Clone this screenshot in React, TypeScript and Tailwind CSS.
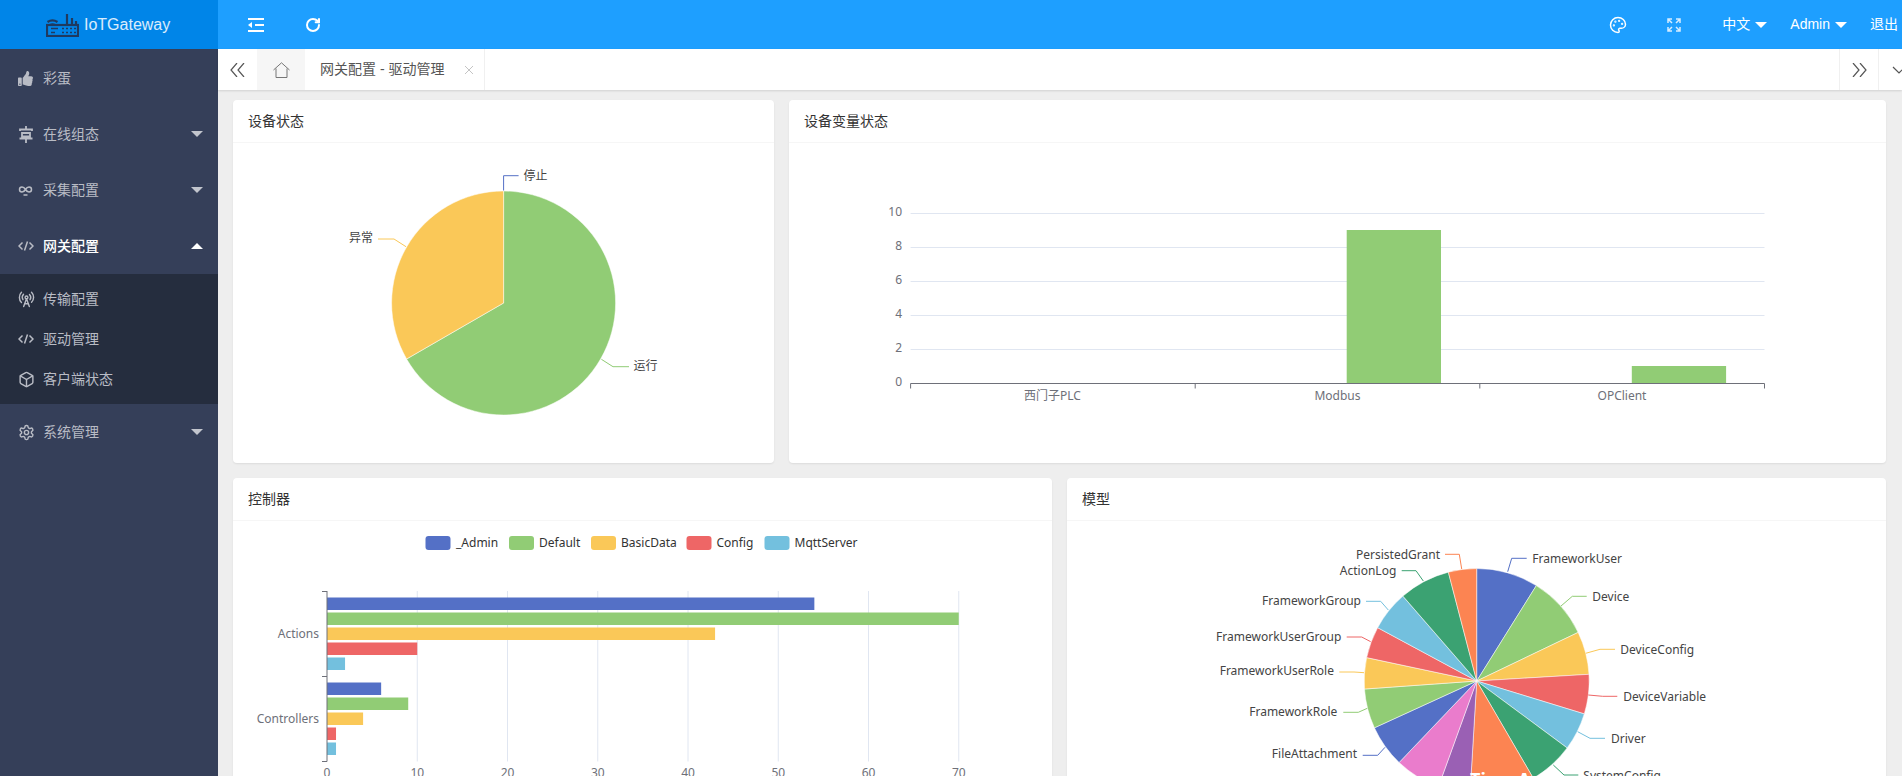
import React from "react";
import { FaThumbsUp } from "react-icons/fa";
import { LuBox, LuPalette, LuRadioTower, LuRotateCw, LuSettings } from "react-icons/lu";

const C = {
  blue: "#5470c6",
  green: "#91cc75",
  yellow: "#fac858",
  red: "#ee6666",
  sky: "#73c0de",
  teal: "#3ba272",
  orange: "#fc8452",
  purple: "#9a60b4",
  pink: "#ea7ccc",
};

function arc(cx: number, cy: number, r: number, from: number, to: number) {
  const p = (deg: number) => {
    const a = (deg * Math.PI) / 180;
    return `${cx + r * Math.sin(a)} ${cy - r * Math.cos(a)}`;
  };
  return `M${cx} ${cy}L${p(from)}A${r} ${r} 0 ${to - from > 180 ? 1 : 0} 1 ${p(to)}Z`;
}

const Caret = ({ up, active }: { up?: boolean; active?: boolean }) => (
  <span
    className={`ml-auto mr-[15px] h-0 w-0 border-x-[6px] border-x-transparent ${up ? "border-b-[6px]" : "border-t-[6px]"} ${
      active ? "border-b-white" : "border-t-[#c2c5cd]"
    }`}
  />
);

function ChainIcon() {
  return (
    <svg width="15" height="16" viewBox="0 0 15 16" fill="none" stroke="currentColor" strokeWidth="1.5">
      <path d="M7.5 7.5C6.5 5.8 5.5 5 4 5a2.5 2.5 0 0 0 0 5c1.5 0 2.5-.8 3.5-2.5S9.500 5 11 5a2.500 2.500 0 0 1 0 5c-1.500 0-2.500-.8-3.500-2.500Z" />
      <path d="M5.500 13h4" />
    </svg>
  );
}

function FlowIcon() {
  return (
    <svg width="16" height="17" viewBox="0 0 16 17" fill="none" stroke="currentColor" strokeWidth="1.800">
      <path d="M8 0v3M2 5V3.500h12V5M4 7h8v3.500H4zM1.500 12.500h13M8 12.500V17" />
    </svg>
  );
}

function CodeIcon() {
  return (
    <svg width="16" height="16" viewBox="0 0 16 16" fill="none" stroke="currentColor" strokeWidth="1.500">
      <path d="M4.500 4.500L1 8l3.500 3.500M11.500 4.500L15 8l-3.500 3.500M9.500 3.500L6.500 12.500" />
    </svg>
  );
}

const MenuItem = ({ icon, label, open, active }: { icon: React.ReactNode; label: string; open?: boolean; active?: boolean }) => (
  <div className={`flex h-14 items-center pl-[18px] text-[14px] ${active ? "font-medium text-white" : "text-[#b9bcc5]"}`}>
    <span className="flex w-[25px] text-[#b9bcc5]">{icon}</span>
    <span>{label}</span>
    {open !== undefined && <Caret up={open} active={open} />}
  </div>
);

const SubItem = ({ icon, label }: { icon: React.ReactNode; label: string }) => (
  <div className="flex h-10 items-center pl-[18px] text-[14px] text-[#b9bcc5]">
    <span className="flex w-[25px]">{icon}</span>
    {label}
  </div>
);

function Sidebar() {
  return (
    <aside className="w-[218px] shrink-0 bg-[#353f59] pt-px">
      <MenuItem icon={<FaThumbsUp size={15} />} label="彩蛋" />
      <MenuItem icon={<FlowIcon />} label="在线组态" open={false} />
      <MenuItem icon={<ChainIcon />} label="采集配置" open={false} />
      <MenuItem icon={<CodeIcon />} label="网关配置" open active />
      <div className="bg-[#252d3e] py-[5px]">
        <SubItem icon={<LuRadioTower size={17} />} label="传输配置" />
        <SubItem icon={<CodeIcon />} label="驱动管理" />
        <SubItem icon={<LuBox size={17} />} label="客户端状态" />
      </div>
      <MenuItem icon={<LuSettings size={17} />} label="系统管理" open={false} />
    </aside>
  );
}

function Logo() {
  return (
    <svg width="33" height="24" viewBox="0 0 33 24" fill="none" stroke="#1f3a5f" strokeWidth="2.200">
      <rect x="1" y="12" width="31" height="11" />
      <path d="M1.500 9a9 9 0 0 1 10 0M4 12a5 5 0 0 1 5 0M21 11V1M26 11V5M30 11V8" />
      <path d="M5 15.500h7M5 19.500h4" strokeWidth="1.500" />
      <path d="M16 15.500h2M20 15.500h2M24 15.500h2M28 15.500h2M16 19.500h2M20 19.500h2M24 19.500h2M28 19.500h2" strokeWidth="1.500" />
    </svg>
  );
}

function Header() {
  const tri = "mx-[5px] h-0 w-0 border-x-[6px] border-t-[6px] border-x-transparent border-t-white";
  return (
    <header className="flex h-[49px] shrink-0 items-center bg-[#1e9fff] text-[14px] text-white">
      <div className="flex h-full w-[218px] items-center bg-[#0085e8] pl-[46px]">
        <Logo />
        <span className="ml-[5px] text-[16px] text-white/85">IoTGateway</span>
      </div>
      <svg className="ml-[30px]" width="16" height="14" viewBox="0 0 16 14" fill="none" stroke="white" strokeWidth="2">
        <path d="M0 1h16M7 7h9M0 13h16" />
        <path d="M0 7l4-3v6z" fill="white" stroke="none" />
      </svg>
      <LuRotateCw className="ml-[41px]" size={16} strokeWidth={3} />
      <LuPalette className="ml-auto" size={18} />
      <svg className="ml-[40px]" width="14" height="14" viewBox="0 0 14 14" fill="none" stroke="#d6edff" strokeWidth="1.500">
        <path d="M1 5V1h4M1 1l4 4M9 1h4v4M13 1L9 5M1 9v4h4M1 13l4-4M13 9v4H9M13 13L9 9" />
      </svg>
      <span className="ml-[41px]">中文</span>
      <span className={tri} />
      <span className="ml-[18px]">Admin</span>
      <span className={tri} />
      <span className="ml-[18px] mr-[4px]">退出</span>
    </header>
  );
}

function TabBar() {
  return (
    <div className="z-10 flex h-[41px] shrink-0 items-stretch bg-white text-[14px] text-[#555] shadow-[0_1px_2px_rgba(0,0,0,0.12)]">
      <div className="flex w-[39px] items-center justify-center">
        <svg width="15" height="14" viewBox="0 0 15 14" fill="none" stroke="#555" strokeWidth="1.200">
          <path d="M7 0L1 7l6 7M14 0L8 7l6 7" />
        </svg>
      </div>
      <div className="flex w-[48px] items-center justify-center bg-[#f6f6f6]">
        <svg width="17" height="16" viewBox="0 0 17 16" fill="none" stroke="#777" strokeWidth="1">
          <path d="M.5 8L8.500.8 16.500 8M3 6.500V15.500h11V6.500" />
        </svg>
      </div>
      <div className="flex w-[180px] items-center border-r border-[#f0f0f0] pl-[15px]">
        <span>网关配置 - 驱动管理</span>
        <svg className="ml-[20px]" width="10" height="10" viewBox="0 0 10 10" stroke="#c4c4c4" strokeWidth="1">
          <path d="M1 1l8 8M9 1l-8 8" />
        </svg>
      </div>
      <div className="ml-auto flex w-[40px] items-center justify-center border-x border-[#f0f0f0]">
        <svg width="15" height="14" viewBox="0 0 15 14" fill="none" stroke="#555" strokeWidth="1.200">
          <path d="M1 0l6 7-6 7M8 0l6 7-6 7" />
        </svg>
      </div>
      <div className="flex w-[23px] items-center overflow-hidden pl-[13px]">
        <svg className="shrink-0" width="14" height="8" viewBox="0 0 14 8" fill="none" stroke="#555" strokeWidth="1.200">
          <path d="M1 1l6 6 6-6" />
        </svg>
      </div>
    </div>
  );
}

const Card = ({ title, className, children }: { title: string; className: string; children: React.ReactNode }) => (
  <section className={`min-w-0 rounded-sm bg-white shadow-[0_1px_2px_rgba(0,0,0,0.08)] ${className}`}>
    <div className="flex h-[43px] items-center border-b border-[#f6f6f6] px-[15px] text-[14px] text-[#333]">{title}</div>
    {children}
  </section>
);

const chartFont = "block font-['Noto_Sans','Noto_Sans_CJK_SC',sans-serif] text-[12px]";

function StatusPie() {
  return (
    <svg className={chartFont} width="541" height="320" viewBox="233 143 541 320">
      <path d={arc(503.6, 303, 112, 0, 240)} fill={C.green} stroke="#fff" strokeWidth=".5" />
      <path d={arc(503.6, 303, 112, 240, 360)} fill={C.yellow} stroke="#fff" strokeWidth=".5" />
      <g fill="none">
        <path d="M503.600 190.500V175.700H518.600" stroke={C.blue} />
        <path d="M378 239H394L406 246.700" stroke={C.yellow} />
        <path d="M601.400 359.300L613 366.700H629" stroke={C.green} />
      </g>
      <g fill="#444" dominantBaseline="central">
        <text x="523.600" y="175">停止</text>
        <text x="349" y="237">异常</text>
        <text x="633.600" y="365">运行</text>
      </g>
    </svg>
  );
}

function VarBars() {
  const ticks = [910.6, 1195.2, 1479.8, 1764.5];
  return (
    <svg className={chartFont} width="1097" height="320" viewBox="789 143 1097 320">
      {[10, 8, 6, 4, 2].map((v) => (
        <path key={v} d={`M910.600 ${383.5 - v * 17}H1764.500`} stroke="#e0e6f1" />
      ))}
      <rect x="1346.700" y="230" width="94.300" height="153.500" fill={C.green} />
      <rect x="1631.800" y="366" width="94.300" height="17.500" fill={C.green} />
      <path d="M910.600 383.500H1764.500" stroke="#6e7079" />
      {ticks.map((x) => (
        <path key={x} d={`M${x} 383.500V388.500`} stroke="#6e7079" />
      ))}
      <g fill="#6e7079" dominantBaseline="central">
        {[10, 8, 6, 4, 2, 0].map((v) => (
          <text key={v} x="902" y={381.5 - v * 17} textAnchor="end">{v}</text>
        ))}
        <text x="1052.500" y="395" textAnchor="middle">西门子PLC</text>
        <text x="1337.500" y="395" textAnchor="middle">Modbus</text>
        <text x="1622" y="395" textAnchor="middle">OPClient</text>
      </g>
    </svg>
  );
}

const legend = [
  { name: "_Admin", x: 425.5, tx: 456, c: C.blue },
  { name: "Default", x: 509, tx: 539, c: C.green },
  { name: "BasicData", x: 591, tx: 621, c: C.yellow },
  { name: "Config", x: 686.5, tx: 716.5, c: C.red },
  { name: "MqttServer", x: 764.5, tx: 794.5, c: C.sky },
];
const actions = [54, 70, 43, 10, 2];
const controllers = [6, 9, 4, 1, 1];

function ControllerBars() {
  return (
    <svg className={chartFont} width="819" height="300" viewBox="233 521 819 300">
      {legend.map((l) => (
        <g key={l.name}>
          <rect x={l.x} y="536" width="25" height="14" rx="3" fill={l.c} />
          <text x={l.tx} y="542" fill="#333" dominantBaseline="central">{l.name}</text>
        </g>
      ))}
      {[1, 2, 3, 4, 5, 6, 7].map((i) => (
        <path key={i} d={`M${327 + i * 90.25} 591V761.500`} stroke="#e0e6f1" />
      ))}
      {actions.map((v, i) => (
        <rect key={i} x="327" y={597.5 + i * 15} width={v * 9.025} height="12.500" fill={legend[i].c} />
      ))}
      {controllers.map((v, i) => (
        <rect key={i} x="327" y={682.5 + i * 15} width={v * 9.025} height="12.500" fill={legend[i].c} />
      ))}
      <path d="M327 591V761.500M322 591.500H327M322 676.500H327M322 761.500H327" stroke="#6e7079" fill="none" />
      <g fill="#6e7079">
        <text x="319" y="633" textAnchor="end" dominantBaseline="central">Actions</text>
        <text x="319" y="718" textAnchor="end" dominantBaseline="central">Controllers</text>
        {[0, 1, 2, 3, 4, 5, 6, 7].map((i) => (
          <text key={i} x={327 + i * 90.25} y="777" textAnchor="middle">{i * 10}</text>
        ))}
      </g>
    </svg>
  );
}

const slices: [number, string][] = [
  [32, C.blue], [64.4, C.green], [86.6, C.yellow], [107, C.red], [126.5, C.sky], [149.8, C.teal],
  [183.4, C.orange], [199.9, C.purple], [223.6, C.pink], [245.4, C.blue], [265.9, C.green], [282, C.yellow],
  [298.3, C.red], [319, C.sky], [345.4, C.teal], [360, C.orange],
];

const pieLabels: { t: string; x: number; y: number; d: string; c: string; end?: boolean }[] = [
  { t: "FrameworkUser", x: 1532.3, y: 558, d: "M1507.700 571.700L1511.700 558.300H1526.700", c: C.blue },
  { t: "Device", x: 1592.3, y: 596, d: "M1561 606L1572.300 596.300H1586.700", c: C.green },
  { t: "DeviceConfig", x: 1620.3, y: 649, d: "M1585.700 653.300L1600 649.300H1615", c: C.yellow },
  { t: "DeviceVariable", x: 1623.3, y: 696, d: "M1588.300 695L1602.700 696.300H1617.300", c: C.red },
  { t: "Driver", x: 1611, y: 738, d: "M1577.700 731.700L1590 738.300H1605", c: C.sky },
  { t: "SystemConfig", x: 1583.3, y: 775, d: "M1553.300 765L1564 775H1578.300", c: C.teal },
  { t: "PersistedGrant", x: 1440, y: 554, d: "M1461.700 569L1459.300 554.300H1445", c: C.orange, end: true },
  { t: "ActionLog", x: 1396.3, y: 570, d: "M1423.300 581L1416 570.700H1401.700", c: C.teal, end: true },
  { t: "FrameworkGroup", x: 1361, y: 600.7, d: "M1388.300 610L1380.700 601.300H1366", c: C.sky, end: true },
  { t: "FrameworkUserGroup", x: 1341.3, y: 636, d: "M1370.700 641.700L1361.700 637H1346.700", c: C.red, end: true },
  { t: "FrameworkUserRole", x: 1334, y: 670.7, d: "M1364 672.700L1354 672H1339.300", c: C.yellow, end: true },
  { t: "FrameworkRole", x: 1337.3, y: 711.7, d: "M1367.300 708.300L1358.300 712.300H1343.300", c: C.green, end: true },
  { t: "FileAttachment", x: 1357, y: 753.7, d: "M1385 747.300L1377.700 755.300H1362.700", c: C.blue, end: true },
];

function ModelPie() {
  return (
    <svg className={chartFont} width="819" height="300" viewBox="1067 521 819 300">
      {slices.map(([to, c], i) => (
        <path key={i} d={arc(1476.7, 681, 112.5, i ? slices[i - 1][0] : 0, to)} fill={c} stroke="#fff" strokeWidth=".5" />
      ))}
      {pieLabels.map((l) => (
        <g key={l.t}>
          <path d={l.d} fill="none" stroke={l.c} />
          <text x={l.x} y={l.y} fill="#444" textAnchor={l.end ? "end" : "start"} dominantBaseline="central">{l.t}</text>
        </g>
      ))}
      <g fill="#fff" className="text-[18px] font-bold">
        <text x="1470" y="786">Ti</text>
        <text x="1518" y="786">A</text>
      </g>
    </svg>
  );
}

export default function App() {
  return (
    <div className="flex h-screen w-screen flex-col overflow-hidden font-['Liberation_Sans','Noto_Sans_CJK_SC',sans-serif]">
      <Header />
      <div className="flex min-h-0 flex-1">
        <Sidebar />
        <main className="flex min-w-0 flex-1 flex-col bg-[#eeeeee]">
          <TabBar />
          <div className="flex min-h-0 flex-1 flex-col gap-[15px] overflow-hidden pl-[15px] pr-[16px] pt-[10px]">
            <div className="flex shrink-0 gap-[15px]">
              <Card title="设备状态" className="h-[363px] w-[541px] shrink-0">
                <StatusPie />
              </Card>
              <Card title="设备变量状态" className="h-[363px] flex-1">
                <VarBars />
              </Card>
            </div>
            <div className="flex shrink-0 gap-[15px]">
              <Card title="控制器" className="flex-1">
                <ControllerBars />
              </Card>
              <Card title="模型" className="flex-1">
                <ModelPie />
              </Card>
            </div>
          </div>
        </main>
      </div>
    </div>
  );
}
